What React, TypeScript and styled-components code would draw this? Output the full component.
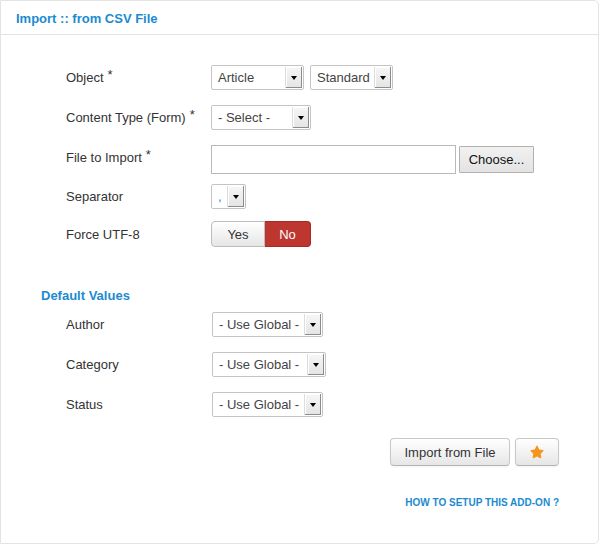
import styled, { createGlobalStyle } from 'styled-components';
import { FaStar } from 'react-icons/fa';

const GlobalStyle = createGlobalStyle`
  html, body {
    margin: 0;
    padding: 0;
    background: #fff;
  }
  body {
    font-family: 'Liberation Sans', Arial, sans-serif;
    font-size: 13px;
    color: #333;
  }
`;

const Panel = styled.div`
  box-sizing: border-box;
  width: 599px;
  height: 544px;
  border: 1px solid #e3e3e3;
  border-radius: 0 5px 5px 0;
  background: #fff;
`;

const Header = styled.div`
  height: 34px;
  border-bottom: 1px solid #e3e3e3;
  display: flex;
  align-items: center;
  padding-left: 15px;
  padding-top: 1px;
  box-sizing: border-box;
`;

const Title = styled.h2`
  margin: 0;
  font-size: 13px;
  font-weight: bold;
  color: #1b8bd0;
`;

const Body = styled.div`
  padding-top: 30px;
`;

const Fieldset = styled.div<{ $control: number }>`
  display: flex;
  flex-direction: column;
  padding-left: 65px;

  --control-x: ${(p) => p.$control}px;
`;

const Row = styled.div<{ $h: number; $center?: boolean }>`
  display: grid;
  grid-template-columns: var(--control-x) 1fr;
  height: ${(p) => p.$h}px;
  align-items: ${(p) => (p.$center ? 'center' : 'start')};
`;

const Label = styled.label<{ $flush?: boolean }>`
  font-size: 13px;
  line-height: 16px;
  padding-top: ${(p) => (p.$flush ? 2 : 5)}px;
  color: #333;
`;

const Star = styled.span`
  position: relative;
  top: -3px;
  margin-left: 4px;
  font-size: 13px;
`;

const Controls = styled.div`
  display: flex;
  gap: 6px;
  align-items: flex-start;
`;

const SelectBox = styled.div<{ $w: number }>`
  box-sizing: border-box;
  width: ${(p) => p.$w}px;
  height: 25px;
  border: 1px solid #c4c4c4;
  border-radius: 2px;
  background: #fff;
  display: flex;
  align-items: stretch;
  overflow: hidden;
`;

const SelectValue = styled.span<{ $accent?: boolean }>`
  flex: 1;
  padding-left: 6px;
  line-height: 23px;
  font-size: 13px;
  color: ${(p) => (p.$accent ? '#3a7bd5' : '#444')};
  white-space: nowrap;
  overflow: hidden;
`;

const SelectArrow = styled.span`
  width: 16px;
  margin: 1px 1px 1px 0;
  background: linear-gradient(#f6f6f6, #e4e4e4);
  border-left: 1px solid #dcdcdc;
  box-shadow: inset -1px -1px 0 #8c8c8c, inset 1px 1px 0 #fff;
  display: flex;
  align-items: center;
  justify-content: center;

  &::after {
    content: '';
    border-left: 3.5px solid transparent;
    border-right: 3.5px solid transparent;
    border-top: 4px solid #000;
  }
`;

const FileInput = styled.div`
  box-sizing: border-box;
  width: 245px;
  height: 29px;
  border: 1px solid #b9b9b9;
  background: #fff;
`;

const ChooseButton = styled.button`
  box-sizing: border-box;
  width: 75px;
  height: 27px;
  margin: 1px 0 0 -3px;
  border: 1px solid #b1b1b1;
  border-radius: 1px;
  background: linear-gradient(#f1f1f1, #e3e3e3);
  font-family: 'Liberation Sans', Arial, sans-serif;
  font-size: 13px;
  color: #111;
  padding: 0;
`;

const Toggle = styled.div`
  display: flex;
  height: 26px;
`;

const ToggleOption = styled.span<{ $active?: boolean; $w: number }>`
  box-sizing: border-box;
  width: ${(p) => p.$w}px;
  display: flex;
  align-items: center;
  justify-content: center;
  font-size: 13px;
  border: 1px solid ${(p) => (p.$active ? '#a52a24' : '#bdbdbd')};
  background: ${(p) =>
    p.$active ? '#bd362f' : 'linear-gradient(#ffffff, #e6e6e6)'};
  color: ${(p) => (p.$active ? '#fff' : '#333')};

  &:first-child {
    border-radius: 4px 0 0 4px;
  }
  &:last-child {
    border-radius: 0 4px 4px 0;
    border-left: none;
  }
`;

const SectionHeading = styled.h3`
  margin: 41px 0 8px 40px;
  font-size: 13px;
  line-height: 16px;
  font-weight: bold;
  color: #1b8bd0;
`;

const Actions = styled.div`
  display: flex;
  justify-content: flex-end;
  gap: 5px;
  padding-right: 39px;
  margin-top: 21px;
`;

const Button = styled.button<{ $w: number }>`
  box-sizing: border-box;
  width: ${(p) => p.$w}px;
  height: 28px;
  border: 1px solid #c8c8c8;
  border-bottom-color: #b3b3b3;
  border-radius: 4px;
  background: linear-gradient(#ffffff, #e6e6e6);
  box-shadow: 0 1px 2px rgba(0, 0, 0, 0.05);
  font-family: 'Liberation Sans', Arial, sans-serif;
  font-size: 13px;
  color: #333;
  padding: 0;
  display: flex;
  align-items: center;
  justify-content: center;
`;

const HelpRow = styled.div`
  display: flex;
  justify-content: flex-end;
  padding-right: 39px;
  margin-top: 31px;
`;

const HelpLink = styled.a`
  font-size: 10px;
  line-height: 12px;
  font-weight: bold;
  color: #1b8bd0;
  text-decoration: none;
  text-transform: uppercase;
`;

type SelectProps = { value: string; width: number; accent?: boolean };

const Select = ({ value, width, accent }: SelectProps) => (
  <SelectBox $w={width}>
    <SelectValue $accent={accent}>{value}</SelectValue>
    <SelectArrow />
  </SelectBox>
);

const App = () => {
  return (
    <>
      <GlobalStyle />
      <Panel>
        <Header>
          <Title>Import :: from CSV File</Title>
        </Header>
        <Body>
          <Fieldset $control={145}>
            <Row $h={40}>
              <Label>
                Object<Star>*</Star>
              </Label>
              <Controls>
                <Select value="Article" width={93} />
                <Select value="Standard" width={83} />
              </Controls>
            </Row>
            <Row $h={40}>
              <Label>
                Content Type (Form)<Star>*</Star>
              </Label>
              <Controls>
                <Select value="- Select -" width={100} />
              </Controls>
            </Row>
            <Row $h={39}>
              <Label>
                File to Import<Star>*</Star>
              </Label>
              <Controls>
                <FileInput />
                <ChooseButton>Choose...</ChooseButton>
              </Controls>
            </Row>
            <Row $h={37}>
              <Label>Separator</Label>
              <Controls>
                <Select value="," width={35} accent />
              </Controls>
            </Row>
            <Row $h={26} $center>
              <Label $flush>Force UTF-8</Label>
              <Toggle>
                <ToggleOption $w={54}>Yes</ToggleOption>
                <ToggleOption $w={46} $active>
                  No
                </ToggleOption>
              </Toggle>
            </Row>
          </Fieldset>

          <SectionHeading>Default Values</SectionHeading>

          <Fieldset $control={146}>
            <Row $h={40}>
              <Label>Author</Label>
              <Controls>
                <Select value="- Use Global -" width={111} />
              </Controls>
            </Row>
            <Row $h={40}>
              <Label>Category</Label>
              <Controls>
                <Select value="- Use Global -" width={114} />
              </Controls>
            </Row>
            <Row $h={25}>
              <Label>Status</Label>
              <Controls>
                <Select value="- Use Global -" width={111} />
              </Controls>
            </Row>
          </Fieldset>

          <Actions>
            <Button $w={120}>Import from File</Button>
            <Button $w={44}>
              <FaStar size={14} color="#f7941d" />
            </Button>
          </Actions>

          <HelpRow>
            <HelpLink href="#">How to setup this add-on ?</HelpLink>
          </HelpRow>
        </Body>
      </Panel>
    </>
  );
};

export default App;
